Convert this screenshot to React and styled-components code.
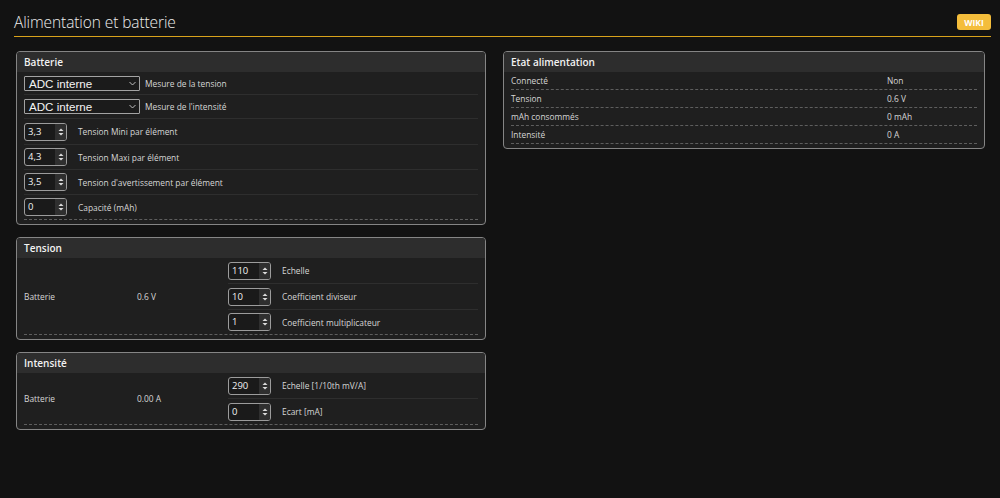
import React from "react";
import styled, { createGlobalStyle } from "styled-components";

const GlobalStyle = createGlobalStyle`
  html, body {
    margin: 0;
    padding: 0;
    background: #121212;
  }
  body {
    font-family: "Open Sans", "DejaVu Sans", sans-serif;
    color: #d9d9d9;
  }
`;

const Page = styled.div`
  width: 1000px;
  height: 498px;
  background: #121212;
`;

const TopBar = styled.div`
  display: flex;
  align-items: center;
  justify-content: space-between;
  box-sizing: border-box;
  height: 37px;
  padding-top: 8px;
  margin: 0 9px 0 14px;
  border-bottom: 1px solid #d9a21b;
`;

const Title = styled.h1`
  margin: 0;
  font-size: 15.5px;
  font-weight: 300;
  color: #ededed;
  letter-spacing: -0.1px;
`;

const WikiButton = styled.button`
  height: 16px;
  width: 34px;
  padding: 0;
  border: none;
  border-radius: 3px;
  background: #f4bd3b;
  color: #fff;
  font-family: "Open Sans", sans-serif;
  font-size: 8.5px;
  font-weight: 700;
`;

const Columns = styled.div`
  display: grid;
  grid-template-columns: 470px 482px;
  gap: 17px;
  align-items: start;
  padding: 14px 15px 0 16px;
`;

const Column = styled.div`
  display: flex;
  flex-direction: column;
  gap: 12px;
`;

const Panel = styled.section`
  border: 1px solid #858585;
  border-radius: 4px;
  background: #1f1f1f;
  overflow: hidden;
`;

const PanelHeader = styled.div`
  height: 20px;
  line-height: 20px;
  padding: 0 7px;
  background: #2d2d2d;
  color: #f2f2f2;
  font-size: 10px;
  font-weight: 600;
`;

const PanelBody = styled.div`
  padding: 0 7px 4px;
`;

const Row = styled.div`
  display: flex;
  align-items: center;
  box-sizing: border-box;
  height: ${(p) => p.h || 25}px;
  border-bottom: 1px ${(p) => (p.last ? "dashed #5e5e5e" : "solid #2e2e2e")};
`;

const Label = styled.span`
  font-size: 8.4px;
  color: #d6d6d6;
  margin-left: ${(p) => p.gap || 11}px;
  white-space: nowrap;
`;

const SelectBox = styled.div`
  display: flex;
  align-items: center;
  justify-content: space-between;
  box-sizing: border-box;
  width: 116px;
  height: 15px;
  padding: 0 3px 0 4px;
  border: 1px solid #a3a3a3;
  border-radius: 1px;
  background: #1b1b1b;
  color: #f4f4f4;
  font-family: "Liberation Sans", Arial, sans-serif;
  font-size: 11.6px;
`;

const Spinner = styled.div`
  display: flex;
  box-sizing: border-box;
  width: 43px;
  height: 18px;
  border: 1px solid #9c9c9c;
  border-radius: 3px;
  background: #1a1a1a;
  overflow: hidden;
`;

const SpinValue = styled.span`
  flex: 1;
  padding-left: 3px;
  line-height: 16px;
  font-size: 9.5px;
  color: #f2f2f2;
`;

const SpinArrows = styled.span`
  display: flex;
  align-items: center;
  justify-content: center;
  width: 11px;
  background: #2f2f2f;
`;

const Split = styled.div`
  display: flex;
  align-items: center;
  border-bottom: 1px dashed #5e5e5e;
`;

const SideCell = styled.div`
  width: ${(p) => p.w}px;
  flex: none;
  font-size: 8.4px;
  color: #d6d6d6;
`;

const SubList = styled.div`
  flex: 1;
  display: flex;
  flex-direction: column;
`;

const SubRow = styled.div`
  display: flex;
  align-items: center;
  box-sizing: border-box;
  height: ${(p) => p.h || 26}px;
  border-bottom: ${(p) => (p.last ? "none" : "1px solid #2e2e2e")};
`;

const StatusRow = styled.div`
  display: grid;
  grid-template-columns: 376px 1fr;
  align-items: center;
  height: 17px;
  border-bottom: 1px dashed #5e5e5e;
  font-size: 8.4px;
  color: #d6d6d6;
`;

function Chevron() {
  return (
    <svg width="7" height="5" viewBox="0 0 7 5">
      <polyline points="0.5,1 3.5,4 6.5,1" fill="none" stroke="#d0d0d0" strokeWidth="0.9" />
    </svg>
  );
}

function Select({ value }) {
  return (
    <SelectBox>
      <span>{value}</span>
      <Chevron />
    </SelectBox>
  );
}

function NumberField({ value }) {
  return (
    <Spinner>
      <SpinValue>{value}</SpinValue>
      <SpinArrows>
        <svg width="6" height="10" viewBox="0 0 6 10">
          <polygon points="3,1.5 5.5,4 0.5,4" fill="#dcdcdc" />
          <polygon points="0.5,6 5.5,6 3,8.5" fill="#dcdcdc" />
        </svg>
      </SpinArrows>
    </Spinner>
  );
}

const batteryFields = [
  { value: "3,3", label: "Tension Mini par élément", h: 26 },
  { value: "4,3", label: "Tension Maxi par élément", h: 25 },
  { value: "3,5", label: "Tension d'avertissement par élément", h: 25 },
  { value: "0", label: "Capacité (mAh)", h: 25, last: true },
];

const tensionFields = [
  { value: "110", label: "Echelle" },
  { value: "10", label: "Coefficient diviseur" },
  { value: "1", label: "Coefficient multiplicateur", h: 24, last: true },
];

const currentFields = [
  { value: "290", label: "Echelle [1/10th mV/A]" },
  { value: "0", label: "Ecart [mA]", h: 25, last: true },
];

const status = [
  ["Connecté", "Non"],
  ["Tension", "0.6 V"],
  ["mAh consommés", "0 mAh"],
  ["Intensité", "0 A"],
];

function SplitPanel({ title, name, reading, fields }) {
  return (
    <Panel>
      <PanelHeader>{title}</PanelHeader>
      <PanelBody>
        <Split>
          <SideCell w={113}>{name}</SideCell>
          <SideCell w={91}>{reading}</SideCell>
          <SubList>
            {fields.map((f) => (
              <SubRow key={f.label} h={f.h} last={f.last}>
                <NumberField value={f.value} />
                <Label>{f.label}</Label>
              </SubRow>
            ))}
          </SubList>
        </Split>
      </PanelBody>
    </Panel>
  );
}

export default function App() {
  return (
    <Page>
      <GlobalStyle />
      <TopBar>
        <Title>Alimentation et batterie</Title>
        <WikiButton>WIKI</WikiButton>
      </TopBar>
      <Columns>
        <Column>
          <Panel>
            <PanelHeader>Batterie</PanelHeader>
            <PanelBody>
              <Row h={23}>
                <Select value="ADC interne" />
                <Label gap={5}>Mesure de la tension</Label>
              </Row>
              <Row h={24}>
                <Select value="ADC interne" />
                <Label gap={5}>Mesure de l'intensité</Label>
              </Row>
              {batteryFields.map((f) => (
                <Row key={f.label} h={f.h} last={f.last}>
                  <NumberField value={f.value} />
                  <Label>{f.label}</Label>
                </Row>
              ))}
            </PanelBody>
          </Panel>
          <SplitPanel title="Tension" name="Batterie" reading="0.6 V" fields={tensionFields} />
          <SplitPanel title="Intensité" name="Batterie" reading="0.00 A" fields={currentFields} />
        </Column>
        <Column>
          <Panel>
            <PanelHeader>Etat alimentation</PanelHeader>
            <PanelBody>
              {status.map(([k, v]) => (
                <StatusRow key={k}>
                  <span>{k}</span>
                  <span>{v}</span>
                </StatusRow>
              ))}
            </PanelBody>
          </Panel>
        </Column>
      </Columns>
    </Page>
  );
}
